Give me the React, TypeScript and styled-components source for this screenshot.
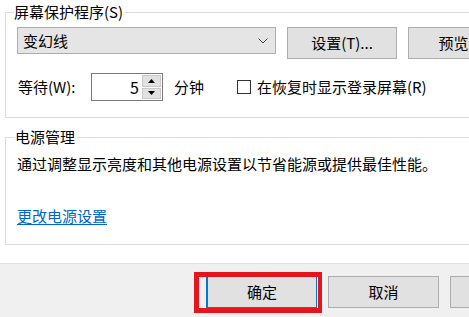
import React from "react";
import styled, { createGlobalStyle } from "styled-components";

const Global = createGlobalStyle`
  html, body { margin: 0; padding: 0; background: #fff; overflow: hidden; }
  body { font-family: "Noto Sans CJK SC", "Microsoft YaHei", sans-serif; font-size: 15px; color: #000; }
`;

export default function App() {
  return (
    <>
      <Global />
      <Page>
        <Body>
          <Group>
            <Legend>屏幕保护程序(S)</Legend>
            <TopRow>
              <Combo>
                <span>变幻线</span>
                <Chevron viewBox="0 0 10 6">
                  <path d="M0.5 0.5 L5 5 L9.5 0.5" fill="none" stroke="#444" strokeWidth="1" />
                </Chevron>
              </Combo>
              <Btn $w={110}>设置(T)...</Btn>
              <Btn $w={110}>预览(V)</Btn>
            </TopRow>
            <WaitRow>
              <Label>等待(W):</Label>
              <Spin>
                <SpinValue>5</SpinValue>
                <SpinArrows>
                  <Arrow>
                    <svg width="7" height="4" viewBox="0 0 7 4"><path d="M3.5 0 L7 4 L0 4 Z" fill="#000" /></svg>
                  </Arrow>
                  <Arrow>
                    <svg width="7" height="4" viewBox="0 0 7 4"><path d="M0 0 L7 0 L3.5 4 Z" fill="#000" /></svg>
                  </Arrow>
                </SpinArrows>
              </Spin>
              <Unit>分钟</Unit>
              <Check>
                <Box />
                <span>在恢复时显示登录屏幕(R)</span>
              </Check>
            </WaitRow>
          </Group>

          <PowerGroup>
            <Legend>电源管理</Legend>
            <Desc>通过调整显示亮度和其他电源设置以节省能源或提供最佳性能。</Desc>
            <PowerLink href="#">更改电源设置</PowerLink>
          </PowerGroup>
        </Body>

        <Footer>
          <FocusWrap>
            <Btn $w={111} $focus>确定</Btn>
            <Highlight />
          </FocusWrap>
          <Btn $w={111}>取消</Btn>
          <Btn $w={111}>应用(A)</Btn>
        </Footer>
      </Page>
    </>
  );
}

/* ===== styled ===== */
const Page = styled.div`
  width: 640px; height: 317px; display: flex; flex-direction: column;
`;
const Body = styled.div`padding-left: 5px;`;

const Group = styled.fieldset`
  margin: 1px 0 0; padding: 4px 0 16px 11px; border: 1px solid #dcdcdc;
  min-width: 0;
`;
const PowerGroup = styled(Group)`
  margin-top: 8px; padding: 5px 0 17px 12px;
`;
const Legend = styled.legend`
  margin-left: -3px; padding: 0 2px 0 0; line-height: 22px; height: 22px; font-size: 15px;
`;

const TopRow = styled.div`display: flex; align-items: flex-start; gap: 11px;`;
const Combo = styled.div`
  width: 259px; height: 27px; box-sizing: border-box; background: #e5e5e5;
  border: 1px solid #adadad; display: flex; align-items: center; justify-content: space-between;
  padding: 0 7px 0 5px; line-height: 22px;
`;
const Chevron = styled.svg`width: 10px; height: 6px;`;

const Btn = styled.button<{ $w: number; $focus?: boolean }>`
  width: ${p => p.$w}px; height: 32px; box-sizing: border-box; flex: none;
  background: #e1e1e1; border: 1px solid ${p => (p.$focus ? "#0078d7" : "#adadad")};
  ${p => (p.$focus ? "border-left-width: 2px;" : "")}
  font-family: inherit; font-size: 15px; color: #000; padding: 0; line-height: 22px;
`;

const WaitRow = styled.div`display: flex; align-items: center; margin-top: 14px; height: 28px;`;
const Label = styled.span`width: 73px; line-height: 22px; margin-left: 1px;`;
const Spin = styled.div`
  width: 72px; height: 28px; box-sizing: border-box; border: 1px solid #7a7a7a;
  display: flex; background: #fff;
`;
const SpinValue = styled.div`flex: 1; text-align: right; padding-right: 3px; line-height: 26px; font-size: 16px;`;
const SpinArrows = styled.div`width: 19px; display: flex; flex-direction: column; gap: 1px; padding: 1px 1px 1px 0;`;
const Arrow = styled.div`
  flex: 1; background: #e1e1e1; border: 1px solid #c8c8c8; display: flex;
  align-items: center; justify-content: center;
`;
const Unit = styled.span`margin-left: 11px; line-height: 22px;`;
const Check = styled.label`display: flex; align-items: center; gap: 6px; margin-left: 33px; line-height: 22px;`;
const Box = styled.span`
  width: 14px; height: 14px; box-sizing: border-box; border: 1px solid #333; background: #fff;
`;

const Desc = styled.div`line-height: 22px; margin-left: -1px;`;
const PowerLink = styled.a`
  display: inline-block; margin-top: 30px; line-height: 22px; color: #0066cc;
  text-decoration: underline; text-underline-offset: 2px; margin-left: -1px;
`;

const Footer = styled.div`
  margin-top: 18px; flex: 1; background: #f0f0f0; border-top: 1px solid #dfdfdf;
  display: flex; align-items: flex-start; gap: 11px; padding: 12px 0 0 206px;
`;
const FocusWrap = styled.div`position: relative; display: flex; flex: none;`;
const Highlight = styled.div`
  position: absolute; left: -12px; top: -4px; right: -5px; bottom: -5px;
  border: 5px solid #e5151d; border-right-width: 4px; pointer-events: none;
`;
